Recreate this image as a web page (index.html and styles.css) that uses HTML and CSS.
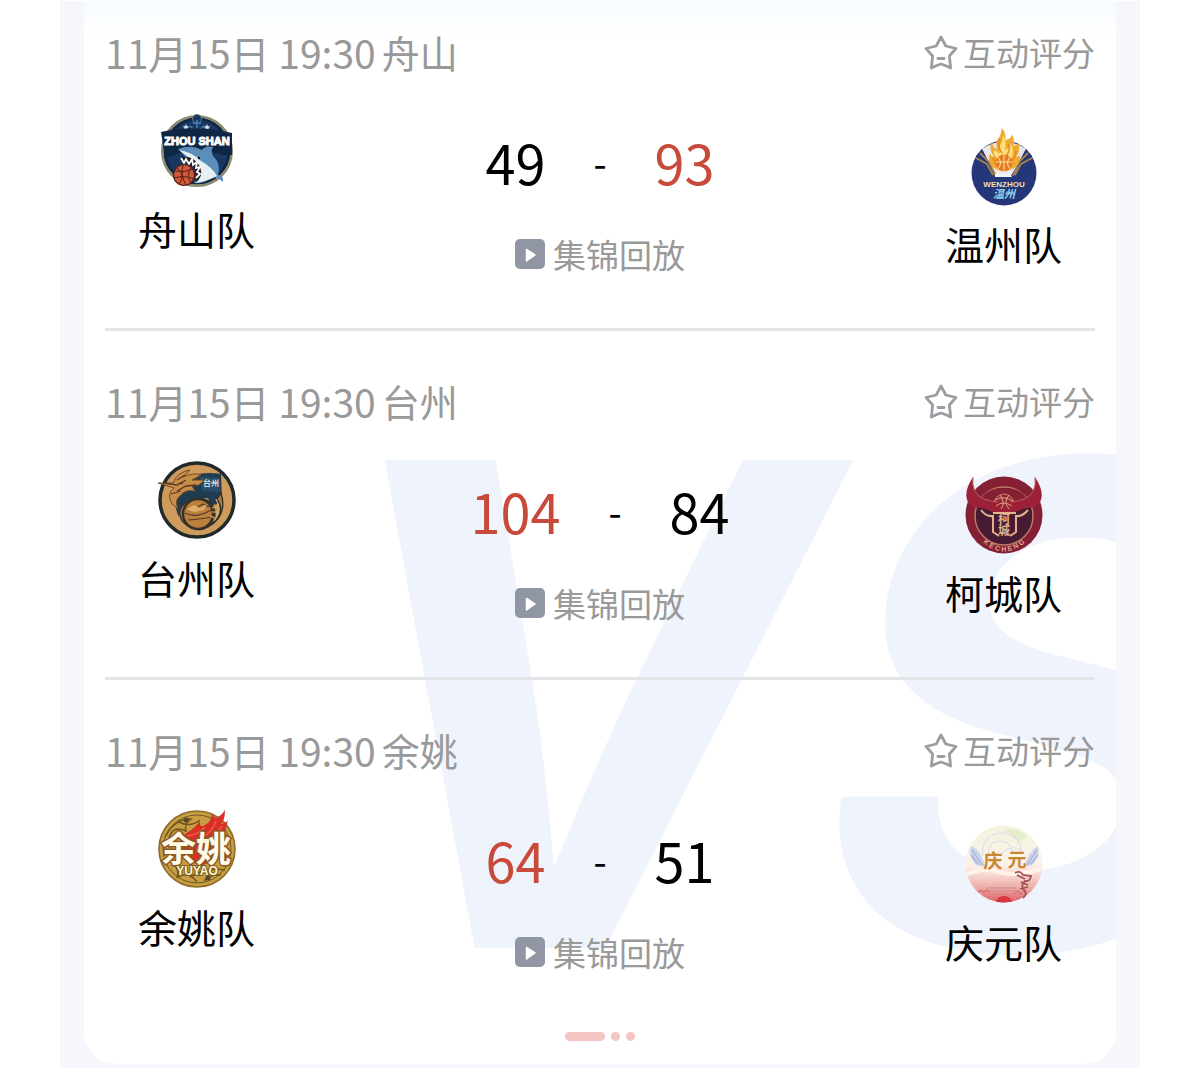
FILE: index.html
```html
<!DOCTYPE html>
<html lang="zh-CN">
<head>
  <meta charset="UTF-8">
  <meta name="viewport" content="width=device-width, initial-scale=1.0">
  <title>赛程比分</title>
  <link rel="stylesheet" href="styles.css">
</head>
<body>

  <!-- Shared icons -->
  <svg class="icon-defs" aria-hidden="true">
    <symbol id="icon-star" viewBox="0 0 34 36">
      <path d="M17 3 L21.8 12 L32 14.5 L25.4 22 L26.6 34 Q22 31.5 17 30 Q12 31.5 7.4 34 L8.6 22 L2 14.5 L12.2 12 Z" fill="none" stroke="#9a9da1" stroke-width="2.8" stroke-linejoin="round"/>
      <path d="M14 24.5 H20" stroke="#9a9da1" stroke-width="2.8" stroke-linecap="round"/>
    </symbol>
    <symbol id="icon-play" viewBox="0 0 30 30">
      <rect width="30" height="30" rx="5" fill="#9196a5"/>
      <path d="M11.5 10.5 L20 16 L11.5 22 Z" fill="#fff" stroke="#fff" stroke-width="1.5" stroke-linejoin="round"/>
    </symbol>
  </svg>

  <main class="panel">
    <div class="card">
      <div class="watermark" aria-hidden="true">VS</div>

      <section class="match">
        <div class="match-header">
          <div class="match-info"><span class="match-time">11月15日 19:30</span><span>舟山</span></div>
          <a href="#" class="rate-link"><svg class="star"><use href="#icon-star"/></svg>互动评分</a>
        </div>
        <div class="match-body">
          <div class="team">
            <svg class="logo" viewBox="0 0 80 80" aria-hidden="true">
              <circle cx="40" cy="40" r="34.5" fill="#183862" stroke="#8a8a73" stroke-width="3"/>
              <circle cx="40" cy="40" r="32" fill="none" stroke="#0e2443" stroke-width="2.5"/>
              <circle cx="40" cy="8" r="4.5" fill="#173763" stroke="#6d7466"/>
              <path d="M40 9 V19 M36 12 H44 M33 15 Q40 23 47 15" fill="none" stroke="#4076ad" stroke-width="1.8"/>
              <path d="M29 13 l1 2.2 2.4.2 -1.8 1.6.6 2.4 -2.2-1.3 -2.2 1.3.6-2.4 -1.8-1.6 2.4-.2z M50 13 l1 2.2 2.4.2 -1.8 1.6.6 2.4 -2.2-1.3 -2.2 1.3.6-2.4 -1.8-1.6 2.4-.2z" fill="#d6e3ec"/>
              <path d="M4 21 Q40 13 75 22 L75 44 H66 L38 37 L8 47 Z" fill="#102744"/>
              <path d="M21 38 Q34 33 45 39 Q48 34 56 36 Q53 41 57 46 Q64 53 61 64 Q67 65 66 71 Q60 66 55 66 Q48 73 38 72 L43 61 Z" fill="#5c8ebb"/>
              <path d="M22 39 Q35 41 44 50 Q55 56 60 65 Q49 71 37 72 Q45 64 43 55 Z" fill="#e8eff3"/>
              <path d="M23 47 Q36 43 43 56 Q47 66 38 72 Q42 59 34 55 Z" fill="#251d25"/>
              <path d="M24 47 l3 5 2-4 3 5 3-5 1 6 4-3 -1 6 4-1 -3 5 3 2 -4 4" fill="none" stroke="#fff" stroke-width="1.8"/>
              <circle cx="42" cy="47" r="1.2" fill="#111"/>
              <circle cx="27" cy="64" r="10.5" fill="#d35738" stroke="#51221d" stroke-width="1.2"/>
              <path d="M18 60 Q28 62 36 58 M17 67 Q28 64 37 68 M26 54 Q23 64 29 74 M20 57 Q29 64 22 73 M34 57 Q29 64 34 72" fill="none" stroke="#51221d" stroke-width="1"/>
              <text x="40" y="34" class="mark-zhoushan">ZHOU SHAN</text>
            </svg>
            <span class="team-name">舟山队</span>
          </div>
          <div class="result">
            <div class="score"><span>49</span><span class="dash">-</span><span class="win">93</span></div>
            <a href="#" class="replay-link"><svg class="play"><use href="#icon-play"/></svg>集锦回放</a>
          </div>
          <div class="team away">
            <svg class="logo" viewBox="0 0 80 80" aria-hidden="true">
              <circle cx="40" cy="47" r="32.5" fill="#253779"/>
              <path d="M18 23 Q40 8 62 23 L49 50 H31 Z" fill="#ece7eb"/>
              <path d="M12 30 L18 23 L32 50 H47 L62 23 L68 30 L59 56 H21 Z" fill="#253779"/>
              <path d="M12 32 L23 38 L29 49 M16 27 L25 36 L32 50 M68 32 L57 38 L51 49 M64 27 L55 36 L49 50" fill="none" stroke="#a8834f" stroke-width="1.8"/>
              <path d="M38 2 Q43 8 41 14 Q48 13 48 8 Q51 14 49 20 Q54 19 54 15 Q57 25 52 31 Q57 30 56 27 Q57 38 50 42 Q40 48 30 42 Q23 36 26 27 Q27 31 30 31 Q24 22 28 16 Q29 22 33 23 Q31 14 35 12 Q37 8 38 2 Z" fill="#efaa31"/>
              <path d="M39 9 Q44 18 40 24 Q47 22 47 17 Q51 29 46 33 H34 Q27 27 31 24 Q34 28 36 27 Q34 19 38 17 Z" fill="#ffe079"/>
              <path d="M28 32 Q32 34 31 38 M36 13 Q33 21 38 27 M44 18 Q47 23 43 29 M52 25 Q52 32 47 35" fill="none" stroke="#e18720" stroke-width="1.4"/>
              <circle cx="40" cy="37" r="8.5" fill="#e77b25"/>
              <path d="M32 36 H48 M40 29 V45 M34 31 Q39 37 34 43 M46 31 Q41 37 46 43" fill="none" stroke="#fff0a0" stroke-width=".9"/>
              <path d="M31 51 V48 L34 46 36 49 39 46 42 49 45 46 48 51 Z" fill="#f3f5f7"/>
              <text x="40" y="61" class="mark-wenzhou">WENZHOU</text>
              <text x="40" y="72" class="mark-wenzhou-cn">温州</text>
            </svg>
            <span class="team-name">温州队</span>
          </div>
        </div>
      </section>

      <section class="match">
        <div class="match-header">
          <div class="match-info"><span class="match-time">11月15日 19:30</span><span>台州</span></div>
          <a href="#" class="rate-link"><svg class="star"><use href="#icon-star"/></svg>互动评分</a>
        </div>
        <div class="match-body">
          <div class="team">
            <svg class="logo" viewBox="0 0 80 80" aria-hidden="true">
              <circle cx="40" cy="40" r="37" fill="#ce9b5c" stroke="#20292b" stroke-width="3.5"/>
              <path d="M19 23 Q40 10 64 14 L65 41 Q54 50 51 38 L39 40 Q24 43 22 57 Q15 43 19 23 Z" fill="#203c53"/>
              <path d="M43 17 L63 18 V32 L45 31 Z" fill="#284d69"/>
              <path d="M1 23 L16 23 Q20 12 33 10 L26 17 Q37 12 44 15 L35 20 L47 20 L42 25 L35 26 L38 31 Q28 29 23 36 Q17 40 21 49 L15 44 Q9 34 17 28 Z" fill="#c88d47" stroke="#714c26"/>
              <path d="M6 23 L20 25 L29 20 M20 20 L28 15 M20 31 L29 26 L39 25 M14 34 L24 31 M21 24 l5-1" fill="none" stroke="#543c27" stroke-width="1.3"/>
              <path d="M64 33 Q71 56 51 67 Q39 74 26 62 Q20 54 25 46 Q31 38 45 39 Q58 41 58 55 Q58 63 52 66 Q70 54 60 39 Z" fill="#ad793c" stroke="#302d27" stroke-width="1.3"/>
              <circle cx="41" cy="54" r="15" fill="#bd803c" stroke="#35302a" stroke-width="2.5"/>
              <path d="M28 53 Q39 59 54 50 M27 48 L38 49 46 44 52 47 M31 60 Q45 59 54 57" fill="none" stroke="#513b27" stroke-width="1.2"/>
              <path d="M29 49 L37 45 L43 48 L50 44 L47 50 L37 52 Z" fill="#e0ae68"/>
              <path d="M59 39 Q65 49 57 61 M61 46 l-6 2 M61 52 l-6 0 M58 58 l-5-2" fill="none" stroke="#e0ae68" stroke-width="1.2"/>
              <text x="54" y="26" class="mark-taizhou">台州</text>
            </svg>
            <span class="team-name">台州队</span>
          </div>
          <div class="result">
            <div class="score"><span class="win">104</span><span class="dash">-</span><span>84</span></div>
            <a href="#" class="replay-link"><svg class="play"><use href="#icon-play"/></svg>集锦回放</a>
          </div>
          <div class="team away">
            <svg class="logo" viewBox="0 0 80 80" aria-hidden="true">
              <circle cx="40" cy="40" r="38.5" fill="#851f34"/>
              <circle cx="40" cy="41" r="29" fill="#471b33" stroke="#bd7b64" stroke-width="1.5"/>
              <path d="M14 30 Q19 13 40 13 Q61 13 66 30 Z" fill="#851f34"/>
              <circle cx="40" cy="29" r="10" fill="#942839" stroke="#c97e67"/>
              <path d="M9 2 Q7 19 20 24 Q28 27 34 27 L40 31 L46 27 Q52 27 60 24 Q73 19 71 2 Q84 22 72 32 Q56 33 51 38 H29 Q24 33 8 32 Q-4 22 9 2 Z" fill="#9c2038"/>
              <path d="M9 2 Q7 19 20 24 Q28 27 34 27 M46 27 Q52 27 60 24 Q73 19 71 2" fill="none" stroke="#b9605a" stroke-width="1"/>
              <path d="M31 25 Q39 20 49 26 M32 31 Q39 25 48 31 M36 20 Q42 28 37 34 M45 20 Q39 27 45 34" fill="none" stroke="#dda282" stroke-width="1"/>
              <path d="M16 34 Q25 38 29 38 H51 Q56 38 65 34 Q59 43 52 43 L51 58 L45 62 H35 L29 58 L28 43 Q21 43 16 34 Z" fill="#471b33"/>
              <path d="M17 35 Q22 42 29 41 V57 L35 61 M64 35 Q58 42 52 41 V57 L46 61 M29 38 H52" fill="none" stroke="#e3b18d" stroke-width="2"/>
              <text x="40" y="49" class="mark-kecheng-cn">柯</text>
              <text x="40" y="60" class="mark-kecheng-cn">城</text>
              <path id="kecheng-arc" d="M9 57 Q40 96 71 57" fill="none"/>
              <text class="mark-kecheng"><textPath href="#kecheng-arc" startOffset="50%">K E C H E N G</textPath></text>
            </svg>
            <span class="team-name">柯城队</span>
          </div>
        </div>
      </section>

      <section class="match">
        <div class="match-header">
          <div class="match-info"><span class="match-time">11月15日 19:30</span><span>余姚</span></div>
          <a href="#" class="rate-link"><svg class="star"><use href="#icon-star"/></svg>互动评分</a>
        </div>
        <div class="match-body">
          <div class="team">
            <svg class="logo" viewBox="0 0 80 80" aria-hidden="true">
              <circle cx="40" cy="40" r="38" fill="#c79f42" stroke="#8d6c2a" stroke-width="1.6"/>
              <circle cx="40" cy="40" r="34" fill="none" stroke="#725825" stroke-width="1"/>
              <path d="M8 28 Q18 9 34 10 Q27 15 29 22 Q16 16 12 29 M22 13 Q33 19 43 11 M12 51 Q24 60 20 69 M20 69 Q31 61 40 73 M33 68 Q50 58 68 61 M47 72 Q53 65 64 66" fill="none" stroke="#70561f" stroke-width="1.5"/>
              <circle cx="29" cy="11" r="2.5" fill="#574820"/>
              <circle cx="51" cy="69" r="2.5" fill="#574820"/>
              <path d="M22 28 Q36 22 43 12 Q42 18 46 17 Q54 14 55 5 Q57 10 61 8 Q66 5 68 1 Q68 11 64 15 Q69 14 71 11 Q68 22 67 29 Q62 50 44 57 Q30 54 22 28 Z" fill="#d92f27"/>
              <path d="M30 27 Q42 25 48 18 M42 31 Q55 24 59 12 M52 30 Q62 23 65 17" fill="none" stroke="#f05a42" stroke-width="1.5"/>
              <text x="39" y="53" class="mark-yuyao-cn">余姚</text>
              <text x="40" y="66" class="mark-yuyao">YUYAO</text>
            </svg>
            <span class="team-name">余姚队</span>
          </div>
          <div class="result">
            <div class="score"><span class="win">64</span><span class="dash">-</span><span>51</span></div>
            <a href="#" class="replay-link"><svg class="play"><use href="#icon-play"/></svg>集锦回放</a>
          </div>
          <div class="team away">
            <svg class="logo" viewBox="0 0 80 80" aria-hidden="true">
              <defs>
                <linearGradient id="qingyuan-sky" x1="0" y1="0" x2="0" y2="1">
                  <stop offset="0" stop-color="#f3f2df"/>
                  <stop offset=".5" stop-color="#fbf3ea"/>
                  <stop offset=".64" stop-color="#f7d8d2"/>
                  <stop offset=".84" stop-color="#eaa5a1"/>
                  <stop offset="1" stop-color="#df5758"/>
                </linearGradient>
                <clipPath id="qingyuan-clip"><circle cx="40" cy="40" r="38.5"/></clipPath>
              </defs>
              <circle cx="40" cy="40" r="38.5" fill="url(#qingyuan-sky)"/>
              <g clip-path="url(#qingyuan-clip)">
                <path d="M40 6 Q54 3 63 13 L54 18 Q48 9 40 6 Z" fill="#e5eccb"/>
                <path d="M19 32 Q16 12 36 9 Q54 8 58 28 M25 34 Q22 18 36 17 Q47 17 49 30 M38 29 Q51 18 60 30" fill="none" stroke="#e4dce4" stroke-width="1.2"/>
                <path d="M3 50 Q21 43 35 48 Q51 53 77 45" fill="none" stroke="#fff3ea" stroke-width="4"/>
                <path d="M14 67 H55 M19 70 H59 M22 64 H52 M23 75 H57" stroke="#d88383" stroke-width="1"/>
                <path d="M14 69 q3-6 6 0 q3-6 6 0 M51 70 q3-6 6 0 q3-6 6 0" fill="none" stroke="#c96570"/>
                <ellipse cx="40" cy="78" rx="8" ry="6" fill="#d6383e"/>
              </g>
              <path d="M7 22 Q17 26 21 43 L12 41 Q4 32 7 22 Z M74 22 Q65 27 60 43 L68 41 Q76 33 74 22 Z" fill="#cad3eb"/>
              <path d="M8 26 L18 41 M7 31 L14 40 M73 26 L63 41 M74 31 L67 40" stroke="#a8b5da" stroke-width="1.3"/>
              <path d="M51 49 Q56 46 59 51 L67 52 Q66 58 61 57 Q56 61 60 66 Q64 70 59 74 M53 51 l8 4 M57 58 l7 3 M56 65 l8-2" fill="none" stroke="#a55252" stroke-width="1.8"/>
              <text x="29" y="44" class="mark-qingyuan">庆</text>
              <text x="53" y="43" class="mark-qingyuan">元</text>
            </svg>
            <span class="team-name">庆元队</span>
          </div>
        </div>
      </section>

      <nav class="pager" aria-label="分页">
        <button type="button" class="dot active" aria-label="第1页"></button>
        <button type="button" class="dot" aria-label="第2页"></button>
        <button type="button" class="dot" aria-label="第3页"></button>
      </nav>
    </div>
  </main>

</body>
</html>
```

FILE: styles.css
```css
/* General Styles */
* {
  box-sizing: border-box;
}

body {
  margin: 0;
  padding: 1px 0 4px;
  background: #fff;
  color: #000;
  font-family: "Noto Sans CJK SC", sans-serif;
}

a {
  color: inherit;
  text-decoration: none;
}

.icon-defs {
  display: none;
}

/* Panel and card */
.panel {
  width: 90%;
  margin: 0 auto;
  padding: 0 24px 4px;
  background: #f6f6fc;
}

.card {
  position: relative;
  z-index: 0;
  overflow: hidden;
  padding: 0 21px 23px;
  border-radius: 0 0 32px 32px;
  background: linear-gradient(#f6fbfd, #fff 36px);
}

.watermark {
  position: absolute;
  z-index: -1;
  top: 303px;
  left: 234px;
  color: #eff3fc;
  font: italic bold 671px/800px Inter, sans-serif;
  white-space: nowrap;
}

/* Match rows */
.match {
  padding: 48px 0 54px;
  border-bottom: 3px solid #e2e4e8;
}

.match:first-of-type {
  padding-top: 29px;
}

.match:last-of-type {
  padding-bottom: 60px;
  border-bottom: none;
}

.match-header {
  display: flex;
  justify-content: space-between;
  align-items: center;
  height: 44px;
  margin-bottom: 37px;
  color: #999;
}

.match-info {
  display: flex;
  gap: 6px;
  font-size: 38px;
  line-height: 44px;
}

.match-time {
  font-size: 39px;
}

.rate-link,
.replay-link {
  display: flex;
  align-items: center;
  color: #999;
  font-size: 33px;
  line-height: 40px;
}

.rate-link {
  gap: 5px;
}

.star {
  width: 34px;
  height: 36px;
}

.match-body {
  display: grid;
  grid-template-columns: 183px 1fr 183px;
}

/* Teams */
.team {
  display: flex;
  flex-direction: column;
  align-items: center;
  gap: 13px;
}

.away {
  padding-top: 15px;
}

.logo {
  width: 80px;
  height: 80px;
}

.team-name {
  font-size: 39px;
  line-height: 48px;
}

/* Scores */
.result {
  display: flex;
  flex-direction: column;
  align-items: center;
  gap: 40px;
  padding-top: 19px;
}

.score {
  display: flex;
  align-items: center;
  gap: 48px;
  font-size: 54px;
  line-height: 64px;
}

.score .dash {
  font-size: 38px;
}

.score .win {
  color: #c84a3a;
}

.replay-link {
  gap: 8px;
}

.play {
  width: 30px;
  height: 30px;
}

/* Pager */
.pager {
  display: flex;
  justify-content: center;
  gap: 6px;
}

.dot {
  width: 9px;
  height: 9px;
  padding: 0;
  border: none;
  border-radius: 5px;
  background: #f3c6c4;
  cursor: pointer;
}

.dot.active {
  width: 40px;
}

/* Lettering inside the team logos */
.logo text {
  text-anchor: middle;
  font-weight: bold;
}

.mark-zhoushan {
  font-family: "Liberation Sans Narrow", "Liberation Sans", sans-serif;
  font-size: 11px;
  fill: #fff;
  stroke: #fff;
}

.mark-wenzhou {
  font-family: "Liberation Sans", sans-serif;
  font-size: 8px;
  fill: #f2dfa4;
}

.mark-wenzhou-cn {
  font-size: 11px;
  font-style: italic;
  fill: #8cd2ef;
}

.mark-taizhou {
  font-size: 8px;
  fill: #d9dfdc;
}

.mark-kecheng-cn {
  font-size: 12px;
  fill: #e3b18d;
}

.mark-kecheng {
  font-family: "Liberation Sans", sans-serif;
  font-size: 7px;
  fill: #dba68b;
}

.mark-yuyao-cn {
  font-size: 35px;
  fill: #fffbe5;
  stroke: #8b5929;
  stroke-width: 3px;
  paint-order: stroke;
}

.mark-yuyao {
  font-family: "Liberation Sans", sans-serif;
  font-size: 12px;
  fill: #fff6cf;
  stroke: #795a21;
  stroke-width: 2px;
  paint-order: stroke;
}

.mark-qingyuan {
  font-size: 19px;
  fill: #ca8733;
}

@media (max-width: 900px) {
  .panel {
    width: 100%;
  }

  .match-body {
    grid-template-columns: 130px 1fr 130px;
  }

  .match-header {
    height: auto;
    flex-wrap: wrap;
  }

  .score {
    gap: 16px;
  }
}
```
